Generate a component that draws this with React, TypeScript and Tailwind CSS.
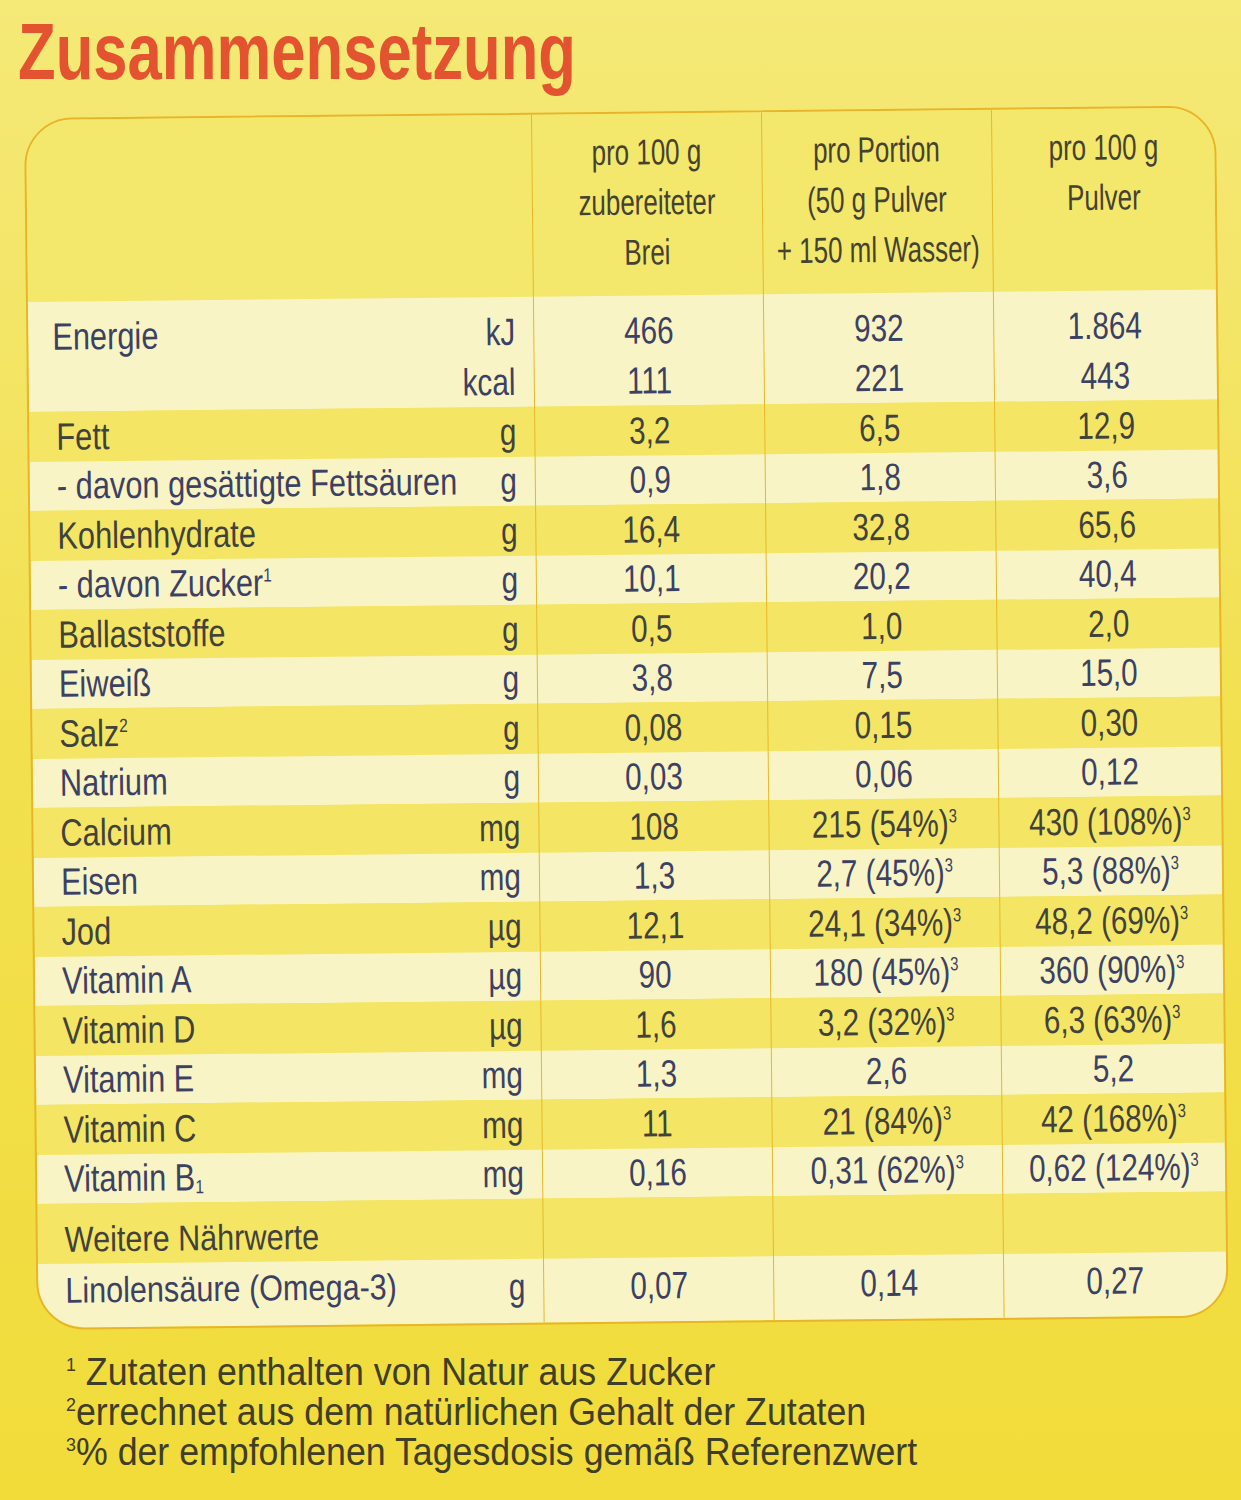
import React from 'react';

type Tone = 'light' | 'yellow';

type Row = {
  label: React.ReactNode;
  unit: string;
  v: React.ReactNode[];
  tone: Tone;
};

// the print uses a condensed face; Liberation Sans squeezed horizontally stands in for it
const N = ({ children, o = 'c', s = 'n' }: { children: React.ReactNode; o?: 'l' | 'c' | 'r'; s?: 'n' | 'h' | 'l' | 'w' }) => {
  const origin = o === 'l' ? 'origin-left' : o === 'r' ? 'origin-right' : 'origin-center';
  const scale =
    s === 'h' ? 'scale-x-[0.72]' : s === 'l' ? 'scale-x-[0.81]' : s === 'w' ? 'scale-x-[0.85]' : 'scale-x-[0.78]';
  return <span className={`inline-block whitespace-nowrap ${scale} ${origin}`}>{children}</span>;
};

const Sup = ({ children }: { children: React.ReactNode }) => (
  <sup className="text-[0.5em] relative -top-[0.75em] align-baseline">{children}</sup>
);

const pct = (a: string, b: string) => (
  <>
    {a} ({b}%)<Sup>3</Sup>
  </>
);

const rows: Row[] = [
  { label: 'Fett', unit: 'g', v: ['3,2', '6,5', '12,9'], tone: 'yellow' },
  { label: '- davon gesättigte Fettsäuren', unit: 'g', v: ['0,9', '1,8', '3,6'], tone: 'light' },
  { label: 'Kohlenhydrate', unit: 'g', v: ['16,4', '32,8', '65,6'], tone: 'yellow' },
  { label: <>- davon Zucker<Sup>1</Sup></>, unit: 'g', v: ['10,1', '20,2', '40,4'], tone: 'light' },
  { label: 'Ballaststoffe', unit: 'g', v: ['0,5', '1,0', '2,0'], tone: 'yellow' },
  { label: 'Eiweiß', unit: 'g', v: ['3,8', '7,5', '15,0'], tone: 'light' },
  { label: <>Salz<Sup>2</Sup></>, unit: 'g', v: ['0,08', '0,15', '0,30'], tone: 'yellow' },
  { label: 'Natrium', unit: 'g', v: ['0,03', '0,06', '0,12'], tone: 'light' },
  { label: 'Calcium', unit: 'mg', v: ['108', pct('215', '54'), pct('430', '108')], tone: 'yellow' },
  { label: 'Eisen', unit: 'mg', v: ['1,3', pct('2,7', '45'), pct('5,3', '88')], tone: 'light' },
  { label: 'Jod', unit: 'µg', v: ['12,1', pct('24,1', '34'), pct('48,2', '69')], tone: 'yellow' },
  { label: 'Vitamin A', unit: 'µg', v: ['90', pct('180', '45'), pct('360', '90')], tone: 'light' },
  { label: 'Vitamin D', unit: 'µg', v: ['1,6', pct('3,2', '32'), pct('6,3', '63')], tone: 'yellow' },
  { label: 'Vitamin E', unit: 'mg', v: ['1,3', '2,6', '5,2'], tone: 'light' },
  { label: 'Vitamin C', unit: 'mg', v: ['11', pct('21', '84'), pct('42', '168')], tone: 'yellow' },
  {
    label: (
      <>
        Vitamin B<sub className="text-[0.5em] relative top-[0.15em] align-baseline">1</sub>
      </>
    ),
    unit: 'mg',
    v: ['0,16', pct('0,31', '62'), pct('0,62', '124')],
    tone: 'light',
  },
];

const cols = 'grid grid-cols-[505px_230px_230px_1fr]';
const divider = 'border-l border-[#e6b82c]';
const toneCls = (t: Tone) => (t === 'light' ? 'bg-[#f8f4c6] text-[#3c4163]' : 'bg-[#f4e664] text-[#41423c]');

function DataRow({ row }: { row: Row }) {
  return (
    <div className={`${cols} ${toneCls(row.tone)} h-[49.5px] items-center`}>
      <div className="flex justify-between pl-[27px] pr-[18px]">
        <span className="min-w-0 flex-1">
          <N o="l" s="l">{row.label}</N>
        </span>
        <N o="r">{row.unit}</N>
      </div>
      {row.v.map((val, i) => (
        <div key={i} className={`${divider} h-full flex items-center justify-center`}>
          <N>{val}</N>
        </div>
      ))}
    </div>
  );
}

export default function App() {
  return (
    <div className="w-[1241px] h-[1500px] overflow-hidden bg-gradient-to-b from-[#f5e977] via-[#f2e04e] to-[#f1dc3a] font-['Liberation_Sans',Arial,sans-serif] text-[#3c4163]">
      <h1 className="pl-[18px] pt-[4px] h-[118px] text-[#e4532f] text-[80px] font-bold leading-[96px]">
        <span className="inline-block whitespace-nowrap scale-x-[0.77] origin-left">Zusammensetzung</span>
      </h1>

      <div className="mx-[24px] w-[1192px] rotate-[-0.6deg] origin-top-left">
        <div className="rounded-[48px] border-2 border-[#e8b52a] overflow-hidden text-[38px] leading-none">
          {/* header */}
          <div className={`${cols} bg-[#f3e76c] h-[182px] text-[36px] text-[#45422f]`}>
            <div />
            <div className={`${divider} flex flex-col items-center pt-[14px] leading-[50px]`}>
              <N s="h">pro 100 g</N>
              <N s="h">zubereiteter</N>
              <N s="h">Brei</N>
            </div>
            <div className={`${divider} flex flex-col items-center pt-[14px] leading-[50px]`}>
              <N s="h">pro Portion</N>
              <N s="h">(50 g Pulver</N>
              <N s="h">+ 150 ml Wasser)</N>
            </div>
            <div className={`${divider} flex flex-col items-center pt-[14px] leading-[50px]`}>
              <N s="h">pro 100 g</N>
              <N s="h">Pulver</N>
            </div>
          </div>

          {/* Energie */}
          <div className={`${cols} ${toneCls('light')} h-[110px]`}>
            <div className="grid grid-cols-[1fr_auto] pl-[24px] pr-[18px] pt-[10px] leading-[50px]">
              <span>
                <N o="l" s="l">Energie</N>
              </span>
              <span className="text-right">
                <N o="r">kJ</N>
              </span>
              <span />
              <span className="text-right">
                <N o="r">kcal</N>
              </span>
            </div>
            {[
              ['466', '111'],
              ['932', '221'],
              ['1.864', '443'],
            ].map((p, i) => (
              <div key={i} className={`${divider} flex flex-col items-center pt-[10px] leading-[50px]`}>
                <N>{p[0]}</N>
                <N>{p[1]}</N>
              </div>
            ))}
          </div>

          {rows.map((r, i) => (
            <DataRow key={i} row={r} />
          ))}

          {/* weitere */}
          <div className={`${cols} ${toneCls('yellow')} h-[60px] items-end`}>
            <div className="pl-[27px] pb-[6px] text-[36px]">
              <N o="l" s="w">Weitere Nährwerte</N>
            </div>
            <div className={`${divider} h-full`} />
            <div className={`${divider} h-full`} />
            <div className={`${divider} h-full`} />
          </div>
          <div className={`${cols} ${toneCls('light')} h-[64px] items-center`}>
            <div className="flex justify-between pl-[27px] pr-[18px] pb-[8px]">
              <span className="min-w-0 flex-1 text-[36px]">
                <N o="l" s="w">Linolensäure (Omega-3)</N>
              </span>
              <N o="r">g</N>
            </div>
            {['0,07', '0,14', '0,27'].map((v, i) => (
              <div key={i} className={`${divider} h-full flex items-center justify-center pb-[8px]`}>
                <N>{v}</N>
              </div>
            ))}
          </div>
        </div>
      </div>

      <div className="pl-[66px] pt-[22px] text-[38px] leading-[40px] text-[#403e25]">
        <p>
          <span className="inline-block whitespace-nowrap scale-x-[0.94] origin-left">
            <Sup>1</Sup> Zutaten enthalten von Natur aus Zucker
          </span>
        </p>
        <p>
          <span className="inline-block whitespace-nowrap scale-x-[0.94] origin-left">
            <Sup>2</Sup>errechnet aus dem natürlichen Gehalt der Zutaten
          </span>
        </p>
        <p>
          <span className="inline-block whitespace-nowrap scale-x-[0.94] origin-left">
            <Sup>3</Sup>% der empfohlenen Tagesdosis gemäß Referenzwert
          </span>
        </p>
      </div>
    </div>
  );
}
